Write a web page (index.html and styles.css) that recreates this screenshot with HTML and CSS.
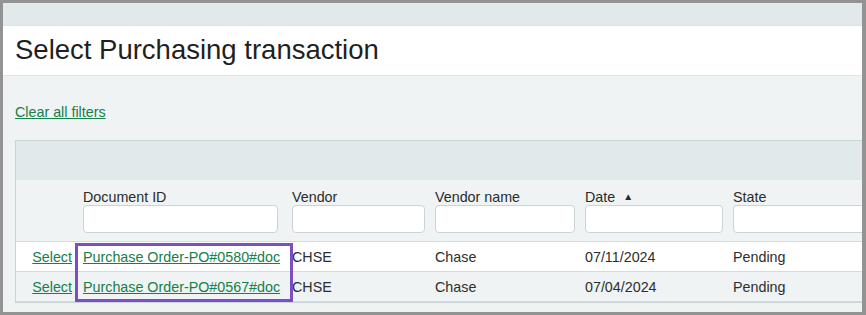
FILE: index.html
```html
<!DOCTYPE html>
<html>
    <head>
        <title>Select Purchasing transaction</title>
        <meta charset="UTF-8">
        <link rel="stylesheet" href="styles.css">
    </head>
    <body>
        <div class="frame">
            <div class="topband"></div>
            <header class="pagehead">
                <h1>Select Purchasing transaction</h1>
            </header>
            <section class="content">
                <a href="#" class="clear">Clear all filters</a>
                <div class="grid">
                    <div class="band"></div>
                    <div class="row head">
                        <div class="cell sel"></div>
                        <div class="cell doc"><span class="label">Document ID</span><input type="text"></div>
                        <div class="cell"><span class="label">Vendor</span><input type="text"></div>
                        <div class="cell"><span class="label">Vendor name</span><input type="text"></div>
                        <div class="cell"><span class="label">Date <span class="sort">&#9650;</span></span><input type="text"></div>
                        <div class="cell"><span class="label">State</span><input type="text"></div>
                    </div>
                    <div class="row data">
                        <div class="cell sel"><a href="#">Select</a></div>
                        <div class="cell"><a href="#">Purchase Order-PO#0580#doc</a></div>
                        <div class="cell">CHSE</div>
                        <div class="cell">Chase</div>
                        <div class="cell">07/11/2024</div>
                        <div class="cell">Pending</div>
                    </div>
                    <div class="row data alt">
                        <div class="cell sel"><a href="#">Select</a></div>
                        <div class="cell"><a href="#">Purchase Order-PO#0567#doc</a></div>
                        <div class="cell">CHSE</div>
                        <div class="cell">Chase</div>
                        <div class="cell">07/04/2024</div>
                        <div class="cell">Pending</div>
                    </div>
                    <div class="highlight"></div>
                </div>
            </section>
        </div>
    </body>
</html>
```

FILE: styles.css
```css
* {
    box-sizing: border-box;
}

body {
    margin: 0;
    background: #939393;
    font-family: "Liberation Sans", Arial, sans-serif;
    font-size: 14.3px;
    color: #2e2e2e;
}

.frame {
    margin: 3px 4px 0 3px;
    height: 309px;
    background: #eff3f4;
    overflow: hidden;
}

.topband {
    height: 22px;
    background: #e2e9eb;
}

/* white title strip */
.pagehead {
    height: 51px;
    background: #fff;
    border-top: 1px solid #dde3e5;
    border-bottom: 1px solid #dde5e7;
    padding-left: 12px;
}

.pagehead h1 {
    margin: 0;
    padding-top: 8px;
    font-size: 27.5px;
    font-weight: normal;
    color: #1f1f1f;
}

.content {
    padding: 28px 0 0 12px;
}

a {
    color: #14804a;
}

.clear {
    display: inline-block;
    height: 36px;
}

.grid {
    position: relative;
    width: 900px;
    border: 1px solid #ccd3d7;
    border-right: none;
}

.band {
    height: 39px;
    background: #e2e9eb;
}

.row {
    display: grid;
    grid-template-columns: 62px 209px 143px 150px 148px 188px;
    border-bottom: 1px solid #d5dce0;
}

.row:last-of-type {
    border-bottom: none;
}

.head {
    height: 62px;
    padding-top: 9px;
}

.head .cell {
    padding-right: 5px;
}

.head .cell.doc {
    padding-right: 9px;
}

.label {
    display: block;
    color: #2b2b2b;
    margin-bottom: 0;
}

.sort {
    font-size: 10px;
    margin-left: 4px;
    vertical-align: 2px;
}

.head input {
    width: 100%;
    height: 28px;
    border: 1px solid #ccd3d7;
    border-radius: 4px;
    background: #fff;
}

.cell {
    padding-left: 5px;
}

.data {
    height: 30px;
    align-items: center;
    background: #fff;
}

.data.alt {
    background: #eff3f4;
}

.sel {
    text-align: right;
    padding-right: 6px;
}

/* annotation box over the document column */
.highlight {
    position: absolute;
    left: 59px;
    top: 102px;
    width: 218px;
    height: 59px;
    border: 3px solid #7a4fc4;
}
```
